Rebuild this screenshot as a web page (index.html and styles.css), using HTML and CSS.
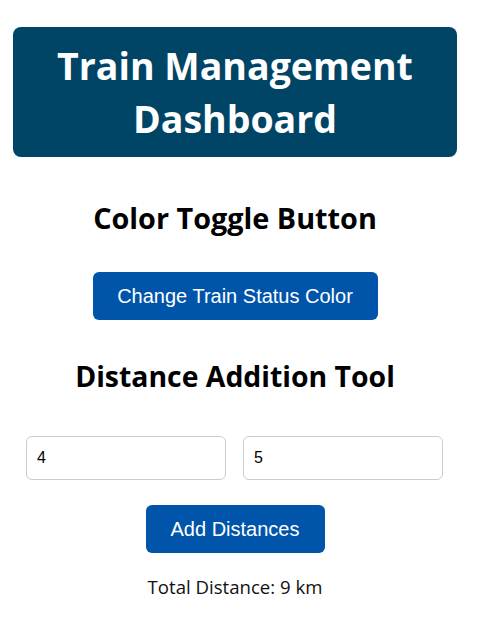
FILE: index.html
```html
<!DOCTYPE html>
<html lang="en">
<head>
<meta charset="utf-8">
<title>Train Management Dashboard</title>
<link rel="stylesheet" href="styles.css">
</head>
<body>
<div class="page">
  <header class="banner">
    <h1 class="banner-title">Train Management Dashboard</h1>
  </header>
  <section class="section">
    <h2 class="section-title">Color Toggle Button</h2>
    <button class="btn btn-wide" type="button">Change Train Status Color</button>
  </section>
  <section class="section">
    <h2 class="section-title section-title-second">Distance Addition Tool</h2>
    <div class="inputs">
      <input class="field" type="text" value="4">
      <input class="field" type="text" value="5">
    </div>
    <button class="btn btn-add" type="button">Add Distances</button>
    <p class="result">Total Distance: 9 km</p>
  </section>
</div>
</body>
</html>
```

FILE: styles.css
```css
* { box-sizing: border-box; }
html, body { margin: 0; padding: 0; background: #fff; }
body {
  font-family: "Open Sans", "Lato", sans-serif;
  color: #000;
}
.page {
  width: 470px;
  padding: 27px 13px 0;
  display: flex;
  flex-direction: column;
  align-items: center;
}
.banner {
  width: 444px;
  background: #004466;
  border-radius: 8px;
  padding: 12px 10px;
}
.banner-title {
  margin: 0;
  color: #fff;
  font-size: 37.5px;
  line-height: 53px;
  font-weight: 700;
  text-align: center;
}
.section {
  display: flex;
  flex-direction: column;
  align-items: center;
  width: 100%;
}
.section-title {
  margin: 42px 0 0;
  font-size: 28.8px;
  line-height: 37px;
  font-weight: 700;
  text-align: center;
}
.section-title-second { margin-top: 38px; font-size: 28.4px; }
.btn {
  font-family: "Liberation Sans", Arial, sans-serif;
  font-size: 20px;
  line-height: 22px;
  color: #fff;
  background: #0055aa;
  border: none;
  border-radius: 6px;
  padding: 13px 20px;
}
.btn-wide { margin-top: 36px; width: 285px; }
.btn-add { margin-top: 25px; width: 179px; }
.inputs {
  display: flex;
  gap: 17px;
  margin-top: 41px;
  margin-right: 1px;
}
.field {
  width: 200px;
  height: 44px;
  border: 1px solid #cccccc;
  border-radius: 6px;
  padding: 0 10px;
  font-family: "Liberation Sans", Arial, sans-serif;
  font-size: 16px;
  color: #000;
  background: #fff;
}
.result {
  margin: 22px 0 0;
  font-size: 18.6px;
  line-height: 24px;
  color: #111;
}
```
